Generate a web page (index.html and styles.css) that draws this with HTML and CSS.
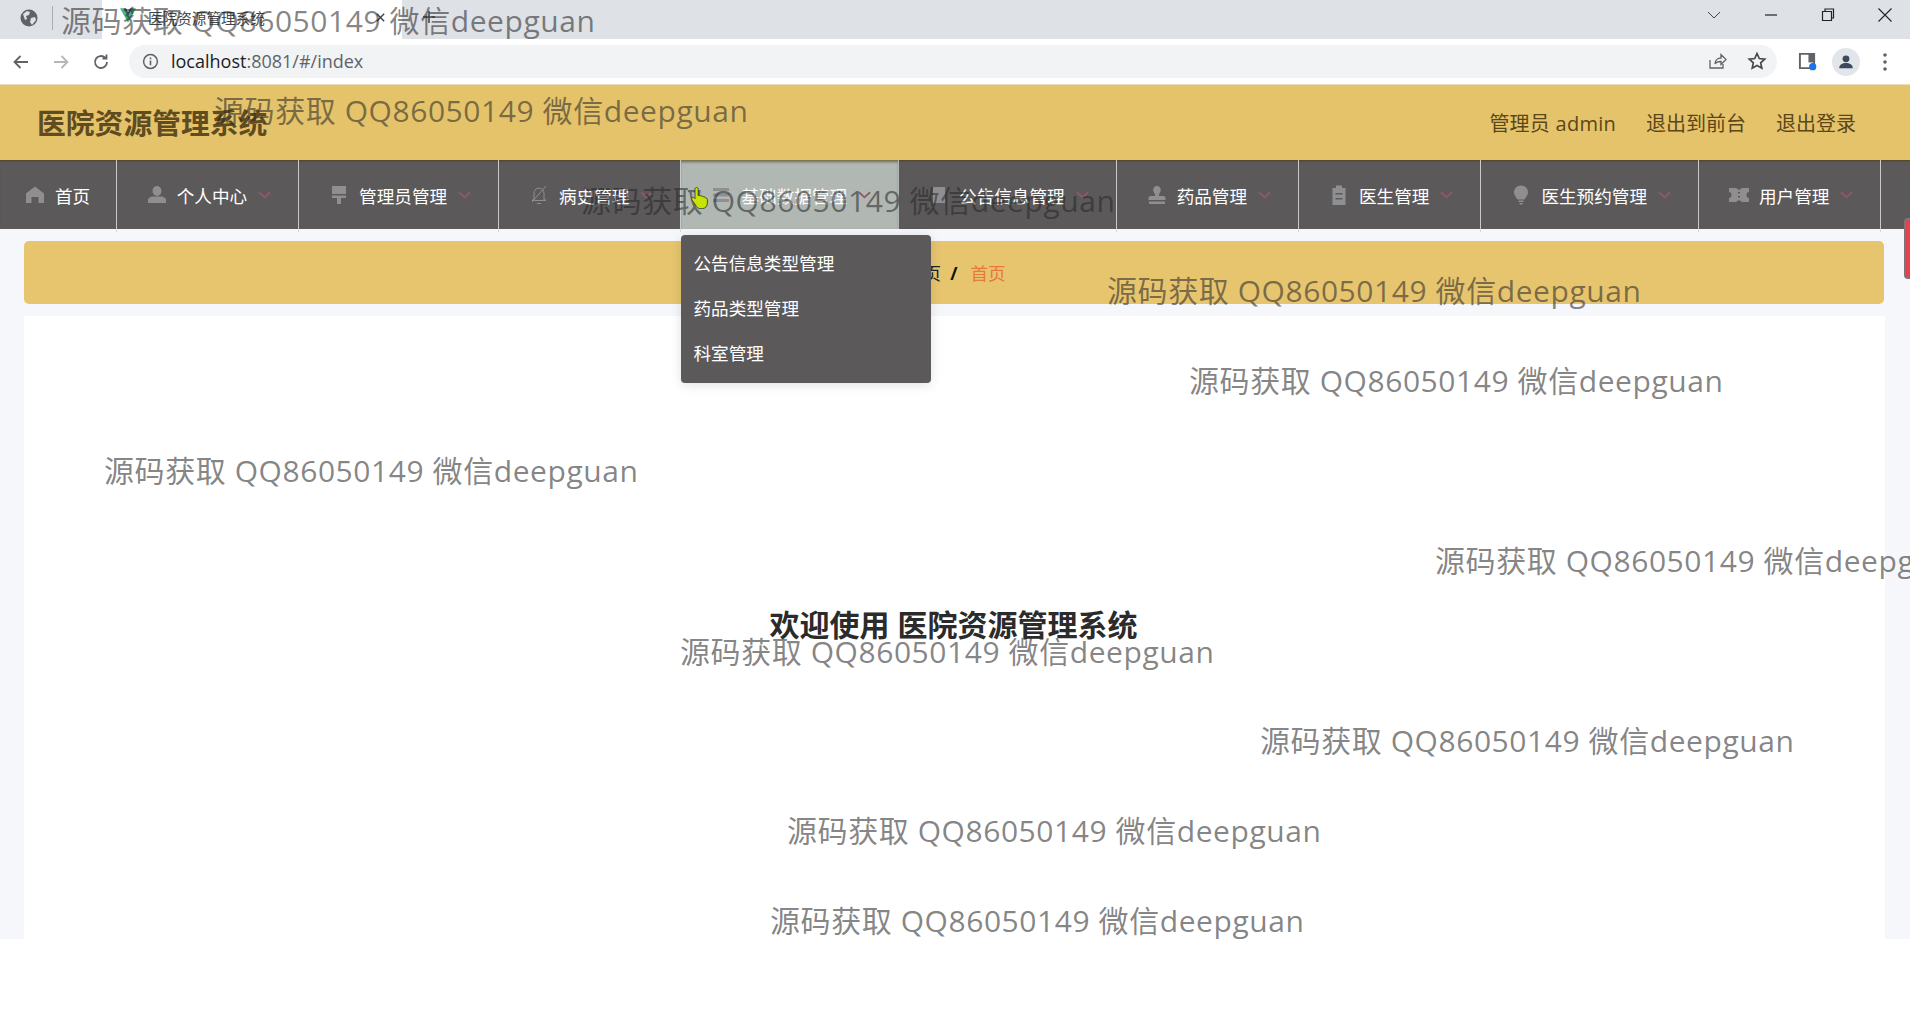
FILE: index.html
```html
<!DOCTYPE html>
<html lang="zh-CN">
<head>
<meta charset="utf-8">
<title>医院资源管理系统</title>
<link rel="stylesheet" href="styles.css">
</head>
<body>
<div class="browser">
  <div class="tabbar">
    <svg class="globe" viewBox="0 0 20 20"><circle cx="10" cy="10" r="8.5" fill="#5f6368"/><path d="M4 6l4-3 3 1-1 3-3 1 1 3-2 1zM12 10l4-1 1 3-4 5-2-3z" fill="#dee1e6"/></svg>
    <span class="tab-sep"></span>
    <div class="tab">
      <svg class="vue" viewBox="0 0 20 18"><path d="M0 0h4l6 10L16 0h4L10 18z" fill="#41b883"/><path d="M4 0h3.5L10 4.500 12.500 0H16l-6 10z" fill="#35495e"/></svg>
      <span class="tab-title">医院资源管理系统</span>
      <svg class="tab-close" viewBox="0 0 12 12"><path d="M2 2l8 8M10 2l-8 8" stroke="#3c4043" stroke-width="1.500"/></svg>
    </div>
    <svg class="newtab" viewBox="0 0 14 14"><path d="M7 1v12M1 7h12" stroke="#3c4043" stroke-width="1.500"/></svg>
    <div class="win-ctrl">
      <svg class="win-icon" viewBox="0 0 16 16"><path d="M2 5l6 6 6-6" fill="none" stroke="#444" stroke-width="1"/></svg>
      <svg class="win-icon" viewBox="0 0 16 16"><path d="M2 8h12" stroke="#222" stroke-width="1.200"/></svg>
      <svg class="win-icon" viewBox="0 0 16 16"><path d="M2.500 4.500h9v9h-9zM5 4.500V2h8.500v9h-2" fill="none" stroke="#222" stroke-width="1.200"/></svg>
      <svg class="win-icon" viewBox="0 0 16 16"><path d="M1.500 1.500l13 13M14.500 1.500l-13 13" stroke="#222" stroke-width="1.100"/></svg>
    </div>
  </div>
  <div class="toolbar">
    <svg class="tb-icon" viewBox="0 0 20 20"><path d="M17 10H4M9.500 4l-6 6 6 6" fill="none" stroke="#5f6368" stroke-width="1.800"/></svg>
    <svg class="tb-icon" viewBox="0 0 20 20"><path d="M3 10h13M10.500 4l6 6-6 6" fill="none" stroke="#b4b7bb" stroke-width="1.800"/></svg>
    <svg class="tb-icon" viewBox="0 0 20 20"><path d="M16 10a6 6 0 1 1-1.800-4.300M15.500 2.500v4h-4" fill="none" stroke="#5f6368" stroke-width="1.800"/></svg>
    <div class="omnibox">
      <svg class="info" viewBox="0 0 16 16"><circle cx="8" cy="8" r="6.500" fill="none" stroke="#5f6368" stroke-width="1.400"/><path d="M8 7v4.500M8 4.300v1.600" stroke="#5f6368" stroke-width="1.500"/></svg>
      <span class="url"><span class="url-host">localhost</span>:8081/#/index</span>
      <span class="omni-spacer"></span>
      <svg class="omni-icon" viewBox="0 0 20 20"><path d="M3 9v8h13v-4M8 13c0-4 3-6 6-6V3.500l5 5-5 5V10.500c-3 0-5 .5-6 2.500z" fill="none" stroke="#5f6368" stroke-width="1.300"/></svg>
      <svg class="omni-icon" viewBox="0 0 20 20"><path d="M10 2.500l2.300 5 5.400.6-4 3.700 1.100 5.400-4.800-2.700-4.800 2.700 1.100-5.400-4-3.700 5.400-.6z" fill="none" stroke="#45484c" stroke-width="1.700"/></svg>
    </div>
    <svg class="side-icon" viewBox="0 0 20 20"><path d="M2 2h15v15H2z" fill="none" stroke="#5f6368" stroke-width="2"/><path d="M11 2h6v9h-6z" fill="#5f6368"/><circle cx="15.500" cy="15.500" r="3.800" fill="#1a73e8"/></svg>
    <div class="avatar"><svg viewBox="0 0 20 20"><circle cx="10" cy="6.500" r="3.800" fill="#3c4a5e"/><path d="M2.500 17c0-4.500 3.500-6 7.500-6s7.500 1.500 7.500 6z" fill="#3c4a5e"/></svg></div>
    <svg class="dots" viewBox="0 0 6 20"><circle cx="3" cy="3" r="1.800" fill="#5f6368"/><circle cx="3" cy="10" r="1.800" fill="#5f6368"/><circle cx="3" cy="17" r="1.800" fill="#5f6368"/></svg>
  </div>
</div>

<div class="app">
  <header class="site-header">
    <h1 class="site-title">医院资源管理系统</h1>
    <div class="site-user">
      <span class="user-name">管理员 admin</span>
      <span>退出到前台</span>
      <span>退出登录</span>
    </div>
  </header>

  <nav class="nav">
    <div class="nav-item home">
      <svg class="nav-icon" viewBox="0 0 20 20"><path d="M10 1.500L1 8.500V18h5.500v-6h7v6H19V8.500z"/></svg>
      <span>首页</span>
    </div>
    <div class="nav-item sub">
      <svg class="nav-icon" viewBox="0 0 20 20"><ellipse cx="10" cy="6" rx="4.500" ry="5"/><path d="M1 18v-3c0-2 3-3.500 5.500-3.500h7c2.500 0 5.500 1.500 5.500 3.500v3z"/></svg>
      <span>个人中心</span>
      <svg class="chev" viewBox="0 0 14 8"><path d="M1 1l6 5.500L13 1" /></svg>
    </div>
    <div class="nav-item sub">
      <svg class="nav-icon" viewBox="0 0 20 20"><path d="M3 1h14v8H3zM3 10.500h14V13h-5v6H8v-6H3z"/></svg>
      <span>管理员管理</span>
      <svg class="chev" viewBox="0 0 14 8"><path d="M1 1l6 5.500L13 1" /></svg>
    </div>
    <div class="nav-item sub">
      <svg class="nav-icon" viewBox="0 0 20 20"><path class="icon-line" d="M10 3c-3 0-5 2.500-5 5.500V15H3M10 3c3 0 5 2.500 5 5.500V15h2M3 15.500h14M8 18.500h4M17 1L3 17"/></svg>
      <span>病史管理</span>
      <svg class="chev" viewBox="0 0 14 8"><path d="M1 1l6 5.500L13 1" /></svg>
    </div>
    <div class="nav-item sub active">
      <svg class="nav-icon" viewBox="0 0 20 20"><path d="M2 3h16v3H2zM2 8.500h16v3H2zM2 14h16v3H2z"/></svg>
      <span>基础数据管理</span>
      <svg class="chev" viewBox="0 0 14 8"><path d="M1 1l6 5.500L13 1" /></svg>
      <div class="dropdown">
        <div class="dropdown-item">公告信息类型管理</div>
        <div class="dropdown-item">药品类型管理</div>
        <div class="dropdown-item">科室管理</div>
      </div>
    </div>
    <div class="nav-item sub">
      <svg class="nav-icon" viewBox="0 0 20 20"><path d="M4 2h12v16H4zM7 6l6 0M7 10h6M7 14h4"/></svg>
      <span>公告信息管理</span>
      <svg class="chev" viewBox="0 0 14 8"><path d="M1 1l6 5.500L13 1" /></svg>
    </div>
    <div class="nav-item sub">
      <svg class="nav-icon" viewBox="0 0 20 20"><path d="M10 1c-2.500 0-3.800 1.800-3.800 4 0 1.800 1.300 3 1.800 4.500V11H3.500C2.500 11 1.500 12 1.500 13v2h17v-2c0-1-1-2-2-2H12V9.500c.5-1.500 1.800-2.700 1.800-4.500 0-2.200-1.300-4-3.800-4zM2 16.500h16V19H2z"/></svg>
      <span>药品管理</span>
      <svg class="chev" viewBox="0 0 14 8"><path d="M1 1l6 5.500L13 1" /></svg>
    </div>
    <div class="nav-item sub">
      <svg class="nav-icon" viewBox="0 0 20 20"><path fill-rule="evenodd" d="M7 0.500h6V3h3.500v17h-13V3H7zM6.500 8v1.600h7V8zM6.500 13v1.600h7V13z"/></svg>
      <span>医生管理</span>
      <svg class="chev" viewBox="0 0 14 8"><path d="M1 1l6 5.500L13 1" /></svg>
    </div>
    <div class="nav-item sub">
      <svg class="nav-icon" viewBox="0 0 20 20"><path d="M10 0.500c-4 0-7 3-7 6.800 0 3 2 4.600 3.500 7.200h7C15 11.900 17 10.300 17 7.300 17 3.500 14 .5 10 .5zM7.500 15.500h5V17h-5zM8.500 18h3v1.500h-3z"/></svg>
      <span>医生预约管理</span>
      <svg class="chev" viewBox="0 0 14 8"><path d="M1 1l6 5.500L13 1" /></svg>
    </div>
    <div class="nav-item sub">
      <svg class="nav-icon" viewBox="0 0 20 20"><path fill-rule="evenodd" d="M0 3h7.500l1 1.500h3l1-1.500H20v4c-1.500 0-2.500 1.300-2.500 3s1 3 2.500 3v4h-7.500l-1-1.500h-3l-1 1.500H0v-4c1.500 0 2.500-1.300 2.500-3S1.500 7 0 7zM9 7v1.500h2V7zM9 11v1.500h2V11z"/></svg>
      <span>用户管理</span>
      <svg class="chev" viewBox="0 0 14 8"><path d="M1 1l6 5.500L13 1" /></svg>
    </div>
  </nav>

  <main class="main">
    <div class="breadcrumb">
      <span class="crumb">首页</span>
      <span class="crumb-sep">/</span>
      <span class="crumb-current">首页</span>
    </div>
    <section class="welcome">
      <h2 class="welcome-title">欢迎使用 医院资源管理系统</h2>
    </section>
  </main>
</div>

<div class="scroll-tab"></div>

<svg class="cursor" viewBox="0 0 18 22"><path d="M4 2.200C4 .9 4.900.4 5.600.4s1.600.5 1.600 1.800v6.300l1.200-.1c.8 0 1.300.3 1.500.8 1-.4 1.900-.1 2.300.7 1-.3 1.900.1 2.300 1 .9 0 1.900.7 1.900 2v3.300c0 3-2.200 5.400-5 5.400H9.500c-2 0-3-.8-4-2.200L1 13.100c-.6-.9-.4-1.900.3-2.400.7-.5 1.600-.4 2.200.3l.5.6z" fill="#c8e400" stroke="#2e2e2e" stroke-width=".8"/></svg>

<div class="watermarks">
  <div class="wm wm-1">源码获取 QQ86050149 微信deepguan</div>
  <div class="wm wm-2">源码获取 QQ86050149 微信deepguan</div>
  <div class="wm wm-3">源码获取 QQ86050149 微信deepguan</div>
  <div class="wm wm-4">源码获取 QQ86050149 微信deepguan</div>
  <div class="wm wm-5">源码获取 QQ86050149 微信deepguan</div>
  <div class="wm wm-6">源码获取 QQ86050149 微信deepguan</div>
  <div class="wm wm-7">源码获取 QQ86050149 微信deepguan</div>
  <div class="wm wm-8">源码获取 QQ86050149 微信deepguan</div>
  <div class="wm wm-9">源码获取 QQ86050149 微信deepguan</div>
  <div class="wm wm-10">源码获取 QQ86050149 微信deepguan</div>
  <div class="wm wm-11">源码获取 QQ86050149 微信deepguan</div>
</div>
</body>
</html>
```
FILE: styles.css
```css
* { box-sizing: border-box; }
html, body { margin: 0; padding: 0; height: 100%; }
body {
  position: relative;
  width: 1910px;
  height: 1020px;
  overflow: hidden;
  background: #fff;
  font-family: "Open Sans", "Noto Sans CJK SC", sans-serif;
}

/* browser chrome */
.tabbar {
  display: flex;
  align-items: center;
  height: 39px;
  background: #dee1e6;
  padding-left: 19px;
}
.globe { width: 20px; height: 20px; margin-top: -3px; }
.tab-sep { width: 1px; height: 24px; background: #a9acb0; margin: -3px 0 0 13px; }
.tab {
  display: flex;
  align-items: center;
  width: 300px;
  height: 39px;
  margin-left: 49px;
  padding-left: 18px;
  background: #fff;
}
.vue { width: 16px; height: 15px; margin-top: -9px; }
.tab-title {
  margin-left: 12px;
  font-size: 14.600px;
  color: #45474a;
  line-height: 1;
  margin-top: -3px;
  white-space: nowrap;
}
.tab-close { width: 11px; height: 11px; margin: -5px 0 0 110px; }
.newtab { width: 14px; height: 14px; margin: -5px 0 0 20px; }
.win-ctrl {
  display: flex;
  align-items: center;
  gap: 41px;
  margin-left: auto;
  margin-right: 17px;
  margin-top: -9px;
}
.win-icon { width: 16px; height: 16px; }

.toolbar {
  display: flex;
  align-items: center;
  height: 45px;
  padding-left: 11px;
  background: #fff;
}
.tb-icon { width: 20px; height: 20px; margin-right: 20px; }
.tb-icon:nth-of-type(3) { margin-right: 18px; }
.omnibox {
  display: flex;
  align-items: center;
  width: 1648px;
  height: 33px;
  margin-top: -1px;
  padding: 0 0 0 13px;
  background: #f1f3f4;
  border-radius: 17px;
}
.info { width: 17px; height: 17px; }
.url {
  margin-left: 12px;
  font-size: 18px;
  color: #5f6368;
  white-space: nowrap;
}
.url-host { color: #202124; }
.omni-spacer { flex: 1; }
.omni-icon { width: 20px; height: 20px; margin-right: 20px; }
.omni-icon:last-child { margin-right: 10px; }
.side-icon { width: 19px; height: 19px; margin-left: 21px; }
.avatar {
  display: flex;
  align-items: center;
  justify-content: center;
  width: 28px;
  height: 28px;
  margin-left: 15px;
  border-radius: 50%;
  background: #e2e5e9;
}
.avatar svg { width: 18px; height: 18px; }
.dots { width: 6px; height: 20px; margin-left: 22px; }

/* app */
.app { display: flex; flex-direction: column; height: 900px; }
.site-header {
  display: flex;
  align-items: center;
  justify-content: space-between;
  flex: none;
  height: 76px;
  padding: 0 54px 0 37px;
  background: #e5c36a;
  border-top: 1px solid #eadcb6;
}
.site-title {
  margin: 2px 0 0;
  font-size: 28.800px;
  font-weight: 700;
  color: #5f4c20;
  line-height: 1;
}
.site-user {
  display: flex;
  gap: 30px;
  font-size: 20px;
  color: #5b4719;
}
.user-name { letter-spacing: .25px; }

.nav {
  display: flex;
  flex: none;
  height: 69px;
  background: #5b595a;
  font-size: 17.600px;
  color: #fff;
  box-shadow: inset 0 2px 2px -1px rgba(80,60,10,.7);
}
.nav-item {
  position: relative;
  display: flex;
  align-items: center;
  height: 69px;
  padding-top: 1px;
  border-right: 1px solid #c9c9c9;
  white-space: nowrap;
}
.nav-item::after {
  content: "";
  position: absolute;
  right: -1px;
  bottom: -3px;
  width: 1px;
  height: 3px;
  background: #d9d9d9;
}
.home { padding-left: 25px; padding-right: 25.500px; }
.sub { padding-left: 30px; padding-right: 27px; }
.active { background: #b1b8b4; border-right-color: transparent; box-shadow: inset 0 3px 3px -1px rgba(90,75,30,.7); }
.active::after { display: none; }
.nav-icon { width: 20px; height: 20px; margin-right: 10px; fill: #8f8f91; flex: none; }
.icon-line { fill: none; stroke: #8f8f91; stroke-width: 1; }
.chev { width: 13px; height: 8px; margin-left: 11px; flex: none; fill: none; stroke: #8c5a6a; stroke-width: 2; }

.dropdown {
  position: absolute;
  z-index: 3;
  left: 0;
  top: 75px;
  width: 250px;
  height: 148px;
  padding: 6px 0 0;
  background: #5b595a;
  border-radius: 4px;
  box-shadow: 0 2px 12px rgba(0,0,0,.12);
}
.dropdown-item {
  height: 45px;
  line-height: 45px;
  padding-left: 12px;
  font-size: 17.600px;
  color: #fff;
}

.main {
  display: flex;
  flex-direction: column;
  flex: none;
  height: 710px;
  padding: 12px 25px 0 24px;
  background: #f6f7fa;
}
.breadcrumb {
  display: flex;
  align-items: center;
  flex: none;
  height: 63px;
  margin-right: 1px;
  padding-left: 882px;
  gap: 9px;
  background: #e7c56f;
  border-radius: 5px;
  font-size: 17.600px;
}
.crumb { color: #222; }
.crumb-sep { color: #111; font-weight: 700; }
.crumb-current { margin-left: 4px; color: #e9783a; }
.welcome {
  display: flex;
  align-items: center;
  justify-content: center;
  flex: 1;
  margin-top: 12px;
  padding-bottom: 5px;
  background: #fff;
}
.welcome-title {
  margin: 0 2px 0 0;
  font-size: 30px;
  font-weight: 700;
  line-height: 1;
  color: #2b2b2b;
}

/* things lying over the page */
.scroll-tab {
  position: absolute;
  left: 1904px;
  top: 218px;
  width: 10px;
  height: 61px;
  background: #e8404e;
  border: 2px solid #777;
  border-radius: 4px;
}
.cursor {
  position: absolute;
  z-index: 6;
  left: 691px;
  top: 187px;
  width: 18px;
  height: 22px;
}
.watermarks {
  position: absolute;
  z-index: 5;
  inset: 0;
  overflow: hidden;
  pointer-events: none;
}
.wm {
  position: absolute;
  font-size: 30px;
  line-height: 40px;
  letter-spacing: .57px;
  color: rgba(40,40,40,.58);
  white-space: nowrap;
}
.wm-1 { left: 61px; top: 1px; }
.wm-2 { left: 214px; top: 91px; }
.wm-3 { left: 581px; top: 181px; }
.wm-4 { left: 1107px; top: 271px; }
.wm-5 { left: 1189px; top: 361px; }
.wm-6 { left: 104px; top: 451px; }
.wm-7 { left: 1435px; top: 541px; }
.wm-8 { left: 680px; top: 632px; }
.wm-9 { left: 1260px; top: 721px; }
.wm-10 { left: 787px; top: 811px; }
.wm-11 { left: 770px; top: 901px; }
```
